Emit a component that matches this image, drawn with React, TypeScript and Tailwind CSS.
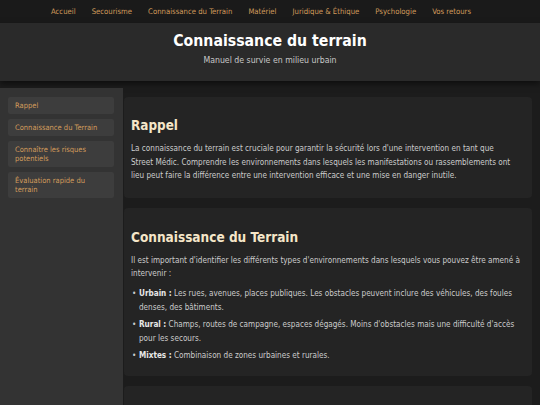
import React from "react";

const nav = ["Accueil", "Secourisme", "Connaissance du Terrain", "Matériel", "Juridique & Éthique", "Psychologie", "Vos retours"];
const side = ["Rappel", "Connaissance du Terrain", "Connaître les risques potentiels", "Évaluation rapide du terrain"];

export default function App() {
  return (
    <div className="w-[540px] h-[405px] overflow-hidden bg-[#1c1c1c] text-[#cccccc]" style={{ fontFamily: '"DejaVu Sans Condensed", "DejaVu Sans", sans-serif' }}>
      <nav className="h-[23px] bg-[#1a1a1a] flex items-center justify-center gap-[16px] pr-[18px] text-[7.7px] text-[#d29c5c]">
        {nav.map((n) => (
          <span key={n}>{n}</span>
        ))}
      </nav>
      <header className="h-[58px] bg-[#2a2a2a] flex flex-col items-center pt-[8px] shadow-[0_3px_6px_rgba(0,0,0,0.5)]">
        <h1 className="text-[15.7px] font-bold text-white leading-[20px]">Connaissance du terrain</h1>
        <p className="text-[8.7px] text-[#c8c8c8] mt-[3px]">Manuel de survie en milieu urbain</p>
      </header>
      <div className="flex mt-[7px]">
        <aside className="w-[123px] h-[330px] bg-[#333333] pt-[9px] pl-[8px] pr-[9px] flex flex-col gap-[5px]">
          {side.map((s) => (
            <div key={s} className="bg-[#3d3d3d] rounded-[2px] px-[7px] py-[4px] text-[7.5px] leading-[9px] text-[#d29c5c]">
              {s}
            </div>
          ))}
        </aside>
        <main className="flex-1 pt-[9px] pl-[1px] pr-[8px] flex flex-col gap-[10px]">
          <section className="bg-[#242424] rounded-[4px] pl-[7px] pr-[10px] pt-[20px] pb-[15px]">
            <h2 className="text-[13.4px] font-bold text-[#f5e6c8] leading-[18px] mb-[7px]">Rappel</h2>
            <p className="text-[8.1px] leading-[13.6px]">
              La connaissance du terrain est cruciale pour garantir la sécurité lors d'une intervention en tant que<br />Street Médic. Comprendre les environnements dans lesquels les manifestations ou rassemblements ont<br />lieu peut faire la différence entre une intervention efficace et une mise en danger inutile.
            </p>
          </section>
          <section className="bg-[#242424] rounded-[4px] pl-[7px] pr-[10px] pt-[20px] pb-[13px]">
            <h2 className="text-[13.5px] font-bold text-[#f5e6c8] leading-[18px] mb-[8px]">Connaissance du Terrain</h2>
            <p className="text-[8.1px] leading-[13.6px]">
              Il est important d'identifier les différents types d'environnements dans lesquels vous pouvez être amené à intervenir :
            </p>
            <ul className="mt-[6px] flex flex-col gap-[4px] text-[8.1px] leading-[13.6px]">
              <li className="flex">
                <span className="w-[8px] shrink-0 pl-[1px]">•</span>
                <span><b className="text-[#e8e8e8]">Urbain :</b> Les rues, avenues, places publiques. Les obstacles peuvent inclure des véhicules, des foules denses, des bâtiments.</span>
              </li>
              <li className="flex">
                <span className="w-[8px] shrink-0 pl-[1px]">•</span>
                <span><b className="text-[#e8e8e8]">Rural :</b> Champs, routes de campagne, espaces dégagés. Moins d'obstacles mais une difficulté d'accès pour les secours.</span>
              </li>
              <li className="flex">
                <span className="w-[8px] shrink-0 pl-[1px]">•</span>
                <span><b className="text-[#e8e8e8]">Mixtes :</b> Combinaison de zones urbaines et rurales.</span>
              </li>
            </ul>
          </section>
          <section className="bg-[#242424] rounded-[4px] h-[60px]"></section>
        </main>
      </div>
    </div>
  );
}
